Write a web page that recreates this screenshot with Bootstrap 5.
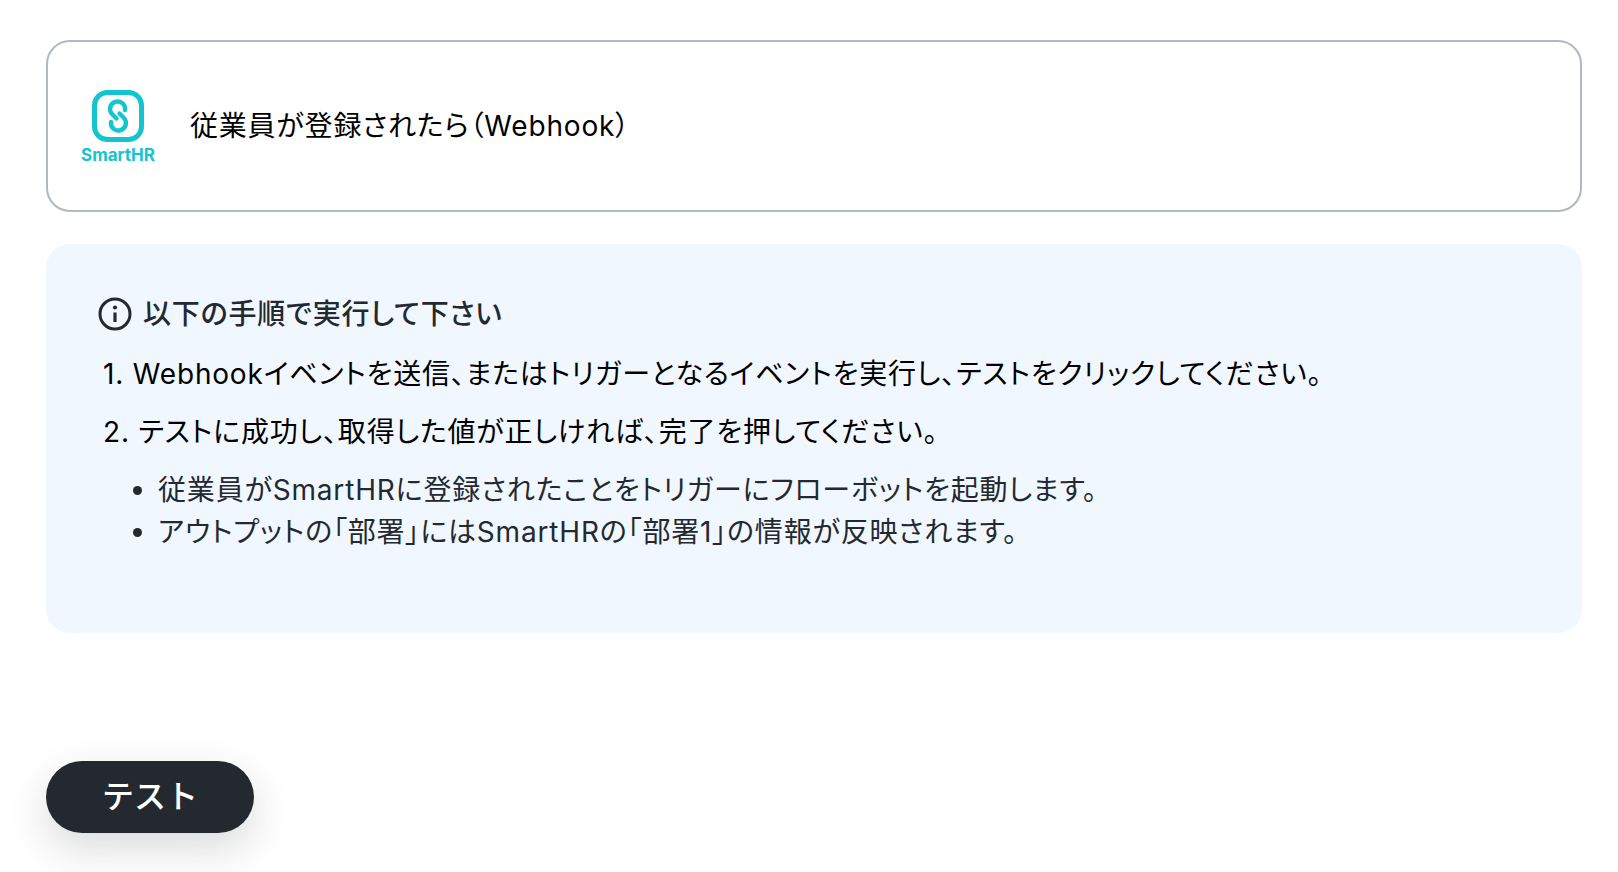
<!DOCTYPE html>
<html lang="ja">
<head>
  <meta charset="UTF-8">
  <title>SmartHR トリガー設定</title>
  <link href="https://cdn.jsdelivr.net/npm/bootstrap@5.3.0/dist/css/bootstrap.min.css" rel="stylesheet">
  <style>
    body {
      font-family: Inter, "Noto Sans CJK JP", sans-serif;
      font-feature-settings: "palt";
      letter-spacing: .82px;
      color: #000;
      background: #fff;
      height: 872px;
      overflow: hidden;
    }
    .page-wrap { padding: 40px 36px 0 46px; }
    .app-box {
      height: 172px;
      border: 2px solid #b0b8c4;
      border-radius: 24px;
      padding: 2px 0 0 33px;
      gap: 35px;
    }
    .app-name { font-size: 28px; line-height: 1.4; }
    .logo-word { font-size: 17px; font-weight: 700; color: #14c4cf; line-height: 18px; letter-spacing: 0; }
    .guide-box {
      height: 389px;
      margin-top: 32px;
      background: #f1f7fe;
      border-radius: 24px;
      padding: 50px 52px 0;
    }
    .guide-head { font-size: 28px; font-weight: 500; line-height: 40px; color: #24292f; gap: 11px; }
    .guide-steps { font-size: 28px; line-height: 40px; list-style: none; margin: 0; padding: 0 0 0 5px; }
    .guide-steps li { margin-top: 18px; }
    .guide-steps li:first-child { margin-top: 20px; }
    .guide-notes { font-size: 28px; line-height: 42px; color: #24292f; margin: 17px 0 0; padding-left: 60px; }
    .test-btn {
      width: 208px;
      height: 72px;
      margin-top: 128px;
      border: 0;
      border-radius: 36px;
      background: #24292f;
      color: #fff;
      font-size: 32px;
      font-weight: 500;
      letter-spacing: 0;
      box-shadow: 0 16px 40px rgba(36, 41, 47, .17);
    }
  </style>
</head>
<body>

<div class="page-wrap">
  <div class="app-box d-flex align-items-center">
    <div class="d-flex flex-column align-items-center">
      <svg width="52" height="52" viewBox="0 0 52 52" fill="none" stroke="#14c4cf">
        <rect x="2.5" y="2.5" width="47" height="47" rx="13" stroke-width="5"/>
        <path d="M33 20 A7.5 7.5 0 1 0 20.5 24.5 L24.5 28.5" stroke-width="4.4" stroke-linecap="round"/>
        <path d="M19 32 A7.5 7.5 0 1 0 31.5 27.5 L27.5 23.5" stroke-width="4.4" stroke-linecap="round"/>
      </svg>
      <div class="logo-word mt-1">SmartHR</div>
    </div>
    <div class="app-name">従業員が登録されたら（Webhook）</div>
  </div>

  <div class="guide-box">
    <div class="guide-head d-flex align-items-center">
      <svg width="34" height="34" viewBox="0 0 34 34" fill="none" stroke="#24292f">
        <circle cx="17" cy="17" r="15" stroke-width="3"/>
        <path d="M17 15.5V25" stroke-width="3.2"/>
        <circle cx="17" cy="10.5" r="2.1" fill="#24292f" stroke="none"/>
      </svg>
      <span>以下の手順で実行して下さい</span>
    </div>
    <ol class="guide-steps">
      <li>1. Webhookイベントを送信、またはトリガーとなるイベントを実行し、テストをクリックしてください。</li>
      <li>2. テストに成功し、取得した値が正しければ、完了を押してください。</li>
    </ol>
    <ul class="guide-notes">
      <li>従業員がSmartHRに登録されたことをトリガーにフローボットを起動します。</li>
      <li>アウトプットの「部署」にはSmartHRの「部署1」の情報が反映されます。</li>
    </ul>
  </div>

  <button type="button" class="test-btn d-block">テスト</button>
</div>

<script src="https://cdn.jsdelivr.net/npm/bootstrap@5.3.0/dist/js/bootstrap.bundle.min.js"></script>
</body>
</html>
